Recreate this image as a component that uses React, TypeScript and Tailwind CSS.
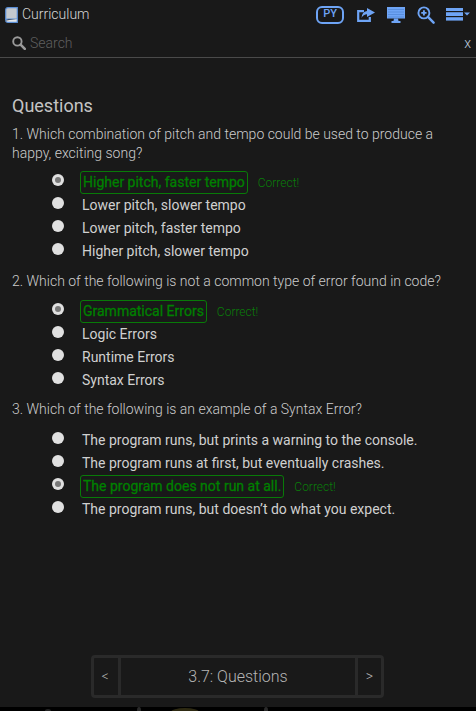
const questions = [
  {
    text: "1. Which combination of pitch and tempo could be used to produce a happy, exciting song?",
    options: ["Higher pitch, faster tempo", "Lower pitch, slower tempo", "Lower pitch, faster tempo", "Higher pitch, slower tempo"],
    correct: 0,
    listClass: "mt-[8px]",
    sectionClass: "mb-[9px]",
  },
  {
    text: "2. Which of the following is not a common type of error found in code?",
    options: ["Grammatical Errors", "Logic Errors", "Runtime Errors", "Syntax Errors"],
    correct: 0,
    listClass: "mt-[9px]",
    sectionClass: "mb-[8px]",
  },
  {
    text: "3. Which of the following is an example of a Syntax Error?",
    options: [
      "The program runs, but prints a warning to the console.",
      "The program runs at first, but eventually crashes.",
      "The program does not run at all.",
      "The program runs, but doesn\u2019t do what you expect.",
    ],
    correct: 2,
    listClass: "mt-[10px]",
    sectionClass: "mb-[8px]",
  },
];

function BookIcon() {
  return (
    <svg width="13" height="16" viewBox="0 0 13 16" className="shrink-0">
      <path d="M0.7 3 Q0.7 0.7 3 0.7 H12.3 V12 H3 Q0.7 12 0.7 13.5 Z" fill="#c4c9cf" stroke="#5b8fd6" strokeWidth="1.2" />
      <path d="M0.7 13.5 Q0.7 15.3 3 15.3 H12.3 V12" fill="#e4e7ea" stroke="#5b8fd6" strokeWidth="1.2" />
    </svg>
  );
}

function SearchIcon() {
  return (
    <svg width="14" height="14" viewBox="0 0 14 14" className="shrink-0">
      <circle cx="5.4" cy="5.4" r="4.2" fill="none" stroke="#9a9a9a" strokeWidth="1.9" />
      <path d="M8.6 8.6 L12.8 12.8" stroke="#9a9a9a" strokeWidth="2.6" strokeLinecap="round" />
    </svg>
  );
}

function ShareIcon() {
  return (
    <svg width="18" height="14" viewBox="0 0 18 14">
      <path d="M7 3.2 H1.2 V12.8 H12.8 V9" fill="none" stroke="#6ea4f5" strokeWidth="2.2" />
      <path d="M10 0 L18 4.5 L10 9 V6.3 Q6.5 6.3 4.5 10 Q5 3.5 10 3 Z" fill="#6ea4f5" />
    </svg>
  );
}

function MonitorIcon() {
  return (
    <svg width="18" height="16" viewBox="0 0 18 16">
      <rect x="0" y="0" width="18" height="11.5" fill="#6ea4f5" />
      <path d="M1 2.5 H17 M1 5 H17 M1 7.5 H17 M1 10 H17" stroke="#4a7fce" strokeWidth="0.6" />
      <path d="M7 11.5 H11 L11.5 14 H13.5 V16 H4.5 V14 H6.5 Z" fill="#6ea4f5" />
    </svg>
  );
}

function ZoomIcon() {
  return (
    <svg width="18" height="18" viewBox="0 0 19 19">
      <circle cx="7.3" cy="7.3" r="5.8" fill="none" stroke="#6ea4f5" strokeWidth="2" />
      <path d="M4.5 7.3 H10.1 M7.3 4.5 V10.1" stroke="#6ea4f5" strokeWidth="2" />
      <path d="M11.6 11.6 L17.5 17.5" stroke="#6ea4f5" strokeWidth="2.6" strokeLinecap="round" />
    </svg>
  );
}

function MenuIcon() {
  return (
    <svg width="24" height="13" viewBox="0 0 24 13">
      <rect x="0" y="0" width="17" height="3" fill="#6ea4f5" />
      <rect x="0" y="4.2" width="17" height="3.8" fill="#6ea4f5" />
      <rect x="0" y="9.2" width="17" height="3.4" fill="#6ea4f5" />
      <path d="M18 4.5 H24 L21 7.5 Z" fill="#6ea4f5" />
    </svg>
  );
}

function Radio({ checked }: { checked: boolean }) {
  return (
    <span className="mb-[5px] flex h-3 w-3 shrink-0 items-center justify-center rounded-full bg-[#e0e0e0]">
      {checked && <span className="h-1.5 w-1.5 rounded-full bg-[#777777]" />}
    </span>
  );
}

export default function App() {
  return (
    <div className="flex h-[711px] w-[476px] flex-col overflow-hidden bg-[#191919] font-['Roboto',sans-serif] text-[#cccccc]">
      <header className="h-[58px] shrink-0 border-b border-[#4a4a4a]">
        <div className="flex h-[29px] items-center justify-between pl-[5px] pr-[6px]">
          <div className="flex items-center gap-[4px] text-[14px] font-light text-[#d5d5d5]">
            <BookIcon />
            <span>Curriculum</span>
          </div>
          <div className="flex items-center">
            <span className="mr-[13px] flex h-[18px] w-[28px] items-center justify-center rounded-[6px] border-2 border-[#6ea4f5] text-[11px] font-medium text-[#6ea4f5]">
              PY
            </span>
            <span className="mr-[12px] flex"><ShareIcon /></span>
            <span className="mr-[12px] flex"><MonitorIcon /></span>
            <span className="mr-[11px] flex"><ZoomIcon /></span>
            <MenuIcon />
          </div>
        </div>
        <div className="flex h-[28px] items-center justify-between pl-[12px] pr-[5px]">
          <div className="flex items-center gap-[4px] text-[14px] font-light text-[#5f5f5f]">
            <SearchIcon />
            <span>Search</span>
          </div>
          <span className="text-[14px] font-light text-[#b9c7da]">x</span>
        </div>
      </header>

      <main className="flex-1 px-[12px] pt-[37px]">
        <h2 className="text-[18px] leading-[22px] font-normal text-[#c4c4c4]">Questions</h2>
        <div className="mt-[8px] flex flex-col">
          {questions.map((q) => (
            <section key={q.text} className={q.sectionClass}>
              <p className="text-[14px] leading-[19px] font-light text-[#cccccc]">{q.text}</p>
              <ul className={`${q.listClass} flex flex-col`}>
                {q.options.map((opt, i) => (
                  <li key={opt} className="flex h-[23px] items-center pl-[40px]">
                    <Radio checked={i === q.correct} />
                    {i === q.correct ? (
                      <>
                        <span className="ml-[16px] flex h-[23px] items-center rounded-[3px] border border-[#087a08] px-[2px] text-[14px] font-normal whitespace-nowrap text-[#008000] [-webkit-text-stroke:0.3px_#008000]">
                          {opt}
                        </span>
                        <span className="ml-[10px] text-[12px] font-light text-[#0a7d0a]">Correct!</span>
                      </>
                    ) : (
                      <span className="ml-[18px] text-[14px] whitespace-nowrap text-[#d0d0d0]">{opt}</span>
                    )}
                  </li>
                ))}
              </ul>
            </section>
          ))}
        </div>
      </main>

      <nav className="mb-[9px] ml-[91px] flex h-[43px] w-[293px] shrink-0 items-stretch rounded-[4px] border-[3px] border-[#2a2a2a] text-[#b5b5b5]">
        <span className="flex w-[24px] items-center justify-center pr-[2px] text-[14px] font-light">&lt;</span>
        <span className="flex flex-1 items-center justify-center border-x-[3px] border-[#2a2a2a] text-[16px] font-light">3.7: Questions</span>
        <span className="flex w-[23px] items-center justify-center text-[14px] font-light">&gt;</span>
      </nav>
      <svg width="476" height="4" viewBox="0 0 476 4" className="block shrink-0 bg-black">
        <ellipse cx="48" cy="4" rx="3" ry="2" fill="#262626" />
        <ellipse cx="139" cy="3" rx="2" ry="3" fill="#2a2a2a" />
        <ellipse cx="185" cy="5" rx="14" ry="4" fill="#2e2a12" />
        <ellipse cx="266" cy="3" rx="2" ry="3" fill="#2a2a2a" />
      </svg>
    </div>
  );
}
